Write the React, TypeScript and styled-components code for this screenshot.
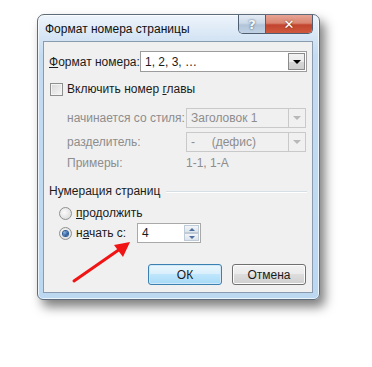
import React from "react";
import styled, { createGlobalStyle, css } from "styled-components";

const Global = createGlobalStyle`
  html, body {
    margin: 0;
    padding: 0;
    background: #ffffff;
  }
  body {
    font-family: "Liberation Sans", Arial, sans-serif;
    font-size: 12px;
    color: #1b1b1b;
  }
`;

const Stage = styled.div`
  width: 372px;
  height: 367px;
  padding: 14px 0 0 37px;
  box-sizing: border-box;
`;

const Window = styled.div`
  width: 283px;
  height: 286px;
  box-sizing: border-box;
  border: 1px solid #5d6b7b;
  border-radius: 7px 7px 6px 6px;
  background: linear-gradient(#eef4fb 0px, #d4e4f4 24px, #c4dcf2 40px, #bcd8f1 100%);
  box-shadow: 5px 7px 11px rgba(0, 0, 0, 0.5), inset 0 0 0 1px rgba(255, 255, 255, 0.7);
  display: flex;
  flex-direction: column;
`;

const TitleBar = styled.div`
  height: 26px;
  display: flex;
  align-items: flex-start;
  padding: 0 6px 0 7px;
`;

const Title = styled.div`
  align-self: center;
  font-size: 12px;
  color: #101010;
  margin-top: 1px;
`;

const CaptionButtons = styled.div`
  margin-left: auto;
  display: flex;
  height: 18px;
  border: 1px solid #4f5e70;
  border-top: none;
  border-radius: 0 0 5px 5px;
  overflow: hidden;
`;

const CaptionButton = styled.div<{ $close?: boolean }>`
  width: ${(p) => (p.$close ? "46px" : "26px")};
  height: 100%;
  display: flex;
  align-items: center;
  justify-content: center;
  font-family: "DejaVu Sans", sans-serif;
  font-weight: bold;
  font-size: 13px;
  color: #ffffff;
  text-shadow: 0 0 2px rgba(0, 0, 0, 0.6);
  ${(p) =>
    p.$close
      ? css`
          background: linear-gradient(#e8a493 0%, #d98672 45%, #c2442e 55%, #cf5a3f 100%);
        `
      : css`
          background: linear-gradient(#e3ebf4 0%, #ccd9e8 45%, #b1c4d9 55%, #c0d2e4 100%);
          border-right: 1px solid #4f5e70;
          color: #f4f8fc;
          text-shadow: 0 0 2px rgba(30, 50, 80, 0.9);
        `}
`;

const Panel = styled.div`
  position: relative;
  width: 270px;
  height: 252px;
  margin: 0 6px 0 5px;
  box-sizing: border-box;
  border: 1px solid #8a9bb0;
  background: #f0f0f0;
  padding: 9px 5px 0 5px;
  display: flex;
  flex-direction: column;
`;

const FormatRow = styled.div`
  display: flex;
  align-items: center;
  justify-content: space-between;
  height: 21px;
`;

const Label = styled.span<{ $disabled?: boolean }>`
  color: ${(p) => (p.$disabled ? "#8d8d8d" : "#1b1b1b")};
  white-space: nowrap;
`;

const Key = styled.span`
  text-decoration: underline;
`;

const Combo = styled.div<{ $width: number; $disabled?: boolean; $height: number }>`
  width: ${(p) => p.$width}px;
  height: ${(p) => p.$height}px;
  box-sizing: border-box;
  display: flex;
  align-items: center;
  border: 1px solid ${(p) => (p.$disabled ? "#c9c9c9" : "#9c9c9c")};
  background: ${(p) => (p.$disabled ? "#f0f0f0" : "#ffffff")};
  color: ${(p) => (p.$disabled ? "#8d8d8d" : "#1b1b1b")};
`;

const ComboText = styled.span`
  flex: 1;
  padding-left: 4px;
  white-space: pre;
`;

const DropButton = styled.div<{ $disabled?: boolean }>`
  width: 17px;
  height: 100%;
  box-sizing: border-box;
  display: flex;
  align-items: center;
  justify-content: center;
  ${(p) =>
    p.$disabled
      ? css`
          border-left: 1px solid #c9c9c9;
          background: #f0f0f0;
        `
      : css`
          margin: 1px;
          height: calc(100% - 2px);
          border: 1px solid #8a8a8a;
          background: linear-gradient(#f2f2f2, #ebebeb 50%, #d6d6d6 51%, #cfcfcf);
        `}
`;

const DownTriangle = styled.div<{ $disabled?: boolean }>`
  width: 0;
  height: 0;
  border-left: 4px solid transparent;
  border-right: 4px solid transparent;
  border-top: 4px solid ${(p) => (p.$disabled ? "#b8b8b8" : "#000000")};
`;

const CheckRow = styled.label`
  display: flex;
  align-items: center;
  margin-top: 10px;
  padding-left: 1px;
  height: 14px;
  gap: 4px;
`;

const CheckBox = styled.span`
  width: 13px;
  height: 13px;
  box-sizing: border-box;
  border: 1px solid #8e8f8f;
  background: linear-gradient(135deg, #d8d8d8, #f6f6f6);
  box-shadow: inset 0 0 0 1px #f4f4f4;
`;

const SubGrid = styled.div`
  display: grid;
  grid-template-columns: 119px 120px;
  grid-template-rows: 20px 20px 14px;
  row-gap: 4px;
  align-items: center;
  padding-left: 18px;
  margin-top: 12px;
`;

const GroupHeader = styled.div`
  display: flex;
  align-items: center;
  margin-top: 14px;
  height: 14px;
`;

const GroupLine = styled.div`
  flex: 1;
  height: 1px;
  margin-left: 6px;
  background: #d5dfe5;
  box-shadow: 0 1px 0 #ffffff;
`;

const RadioRow = styled.div<{ $top: number }>`
  display: flex;
  align-items: center;
  height: 20px;
  margin-top: ${(p) => p.$top}px;
  padding-left: 10px;
`;

const Radio = styled.span<{ $checked?: boolean }>`
  width: 13px;
  height: 13px;
  box-sizing: border-box;
  border-radius: 50%;
  border: 1px solid #8e8f8f;
  background: radial-gradient(circle at 40% 40%, #fbfbfb, #d4d4d4);
  display: flex;
  align-items: center;
  justify-content: center;
  margin-right: 4px;

  &::after {
    content: "";
    display: ${(p) => (p.$checked ? "block" : "none")};
    width: 5px;
    height: 5px;
    border-radius: 50%;
    background: radial-gradient(circle at 35% 35%, #8ab4e6, #1d4f8f 70%);
    box-shadow: 0 0 0 1px #2c5a94;
  }
`;

const RadioText = styled.span<{ $width?: number }>`
  width: ${(p) => (p.$width ? `${p.$width}px` : "auto")};
`;

const Spin = styled.div`
  width: 64px;
  height: 20px;
  box-sizing: border-box;
  border: 1px solid #a9a9a9;
  background: #ffffff;
  display: flex;
  align-items: center;
`;

const SpinValue = styled.span`
  flex: 1;
  padding-left: 4px;
`;

const SpinButtons = styled.div`
  width: 15px;
  height: 16px;
  margin-right: 1px;
  display: flex;
  flex-direction: column;
`;

const SpinButton = styled.div<{ $up?: boolean }>`
  flex: 1;
  box-sizing: border-box;
  border: 1px solid #c0cbd8;
  background: linear-gradient(#f3f6f9, #dbe3ec);
  display: flex;
  align-items: center;
  justify-content: center;

  &::after {
    content: "";
    width: 0;
    height: 0;
    border-left: 3px solid transparent;
    border-right: 3px solid transparent;
    ${(p) =>
      p.$up ? "border-bottom: 3px solid #4d6fa0;" : "border-top: 3px solid #4d6fa0;"}
  }
`;

const ButtonRow = styled.div`
  display: flex;
  justify-content: flex-end;
  gap: 10px;
  margin-top: 21px;
  padding-right: 1px;
`;

const DialogButton = styled.button<{ $primary?: boolean }>`
  width: 74px;
  height: 21px;
  box-sizing: border-box;
  font-family: "Liberation Sans", Arial, sans-serif;
  font-size: 12px;
  color: #1b1b1b;
  border-radius: 3px;
  padding: 0;
  ${(p) =>
    p.$primary
      ? css`
          border: 1px solid #3c7fb1;
          background: linear-gradient(#eaf6fd 0%, #d9f0fc 45%, #bee6fd 50%, #a7d9f5 100%);
          box-shadow: inset 0 0 0 1px #cfe9f9;
        `
      : css`
          border: 1px solid #707070;
          background: linear-gradient(#f2f2f2 0%, #ebebeb 45%, #dddddd 50%, #cfcfcf 100%);
          box-shadow: inset 0 0 0 1px #fcfcfc;
        `}
`;

const Annotation = styled.svg`
  position: absolute;
  left: 28px;
  top: 196px;
  width: 62px;
  height: 46px;
  overflow: visible;
`;

export default function App() {
  return (
    <>
      <Global />
      <Stage>
        <Window>
          <TitleBar>
            <Title>Формат номера страницы</Title>
            <CaptionButtons>
              <CaptionButton>?</CaptionButton>
              <CaptionButton $close>✕</CaptionButton>
            </CaptionButtons>
          </TitleBar>
          <Panel>
            <FormatRow>
              <Label>
                <Key>Ф</Key>ормат номера:
              </Label>
              <Combo $width={167} $height={21}>
                <ComboText>1, 2, 3, …</ComboText>
                <DropButton>
                  <DownTriangle />
                </DropButton>
              </Combo>
            </FormatRow>

            <CheckRow>
              <CheckBox />
              <Label>
                Включить номер <Key>г</Key>лавы
              </Label>
            </CheckRow>

            <SubGrid>
              <Label $disabled>начинается со стиля:</Label>
              <Combo $width={120} $height={20} $disabled>
                <ComboText>Заголовок 1</ComboText>
                <DropButton $disabled>
                  <DownTriangle $disabled />
                </DropButton>
              </Combo>
              <Label $disabled>разделитель:</Label>
              <Combo $width={120} $height={20} $disabled>
                <ComboText>{"-     (дефис)"}</ComboText>
                <DropButton $disabled>
                  <DownTriangle $disabled />
                </DropButton>
              </Combo>
              <Label $disabled>Примеры:</Label>
              <Label $disabled>1-1, 1-А</Label>
            </SubGrid>

            <GroupHeader>
              <Label>Нумерация страниц</Label>
              <GroupLine />
            </GroupHeader>

            <RadioRow $top={5}>
              <Radio />
              <RadioText>
                <Key>п</Key>родолжить
              </RadioText>
            </RadioRow>
            <RadioRow $top={0}>
              <Radio $checked />
              <RadioText $width={61}>
                н<Key>а</Key>чать с:
              </RadioText>
              <Spin>
                <SpinValue>4</SpinValue>
                <SpinButtons>
                  <SpinButton $up />
                  <SpinButton />
                </SpinButtons>
              </Spin>
            </RadioRow>

            <ButtonRow>
              <DialogButton $primary>ОК</DialogButton>
              <DialogButton>Отмена</DialogButton>
            </ButtonRow>

            <Annotation viewBox="0 0 62 46">
              <line x1="2" y1="43" x2="48" y2="11" stroke="#f01414" strokeWidth="3" strokeLinecap="round" />
              <polygon points="58,4 42,7 51,19" fill="#f01414" />
            </Annotation>
          </Panel>
        </Window>
      </Stage>
    </>
  );
}
